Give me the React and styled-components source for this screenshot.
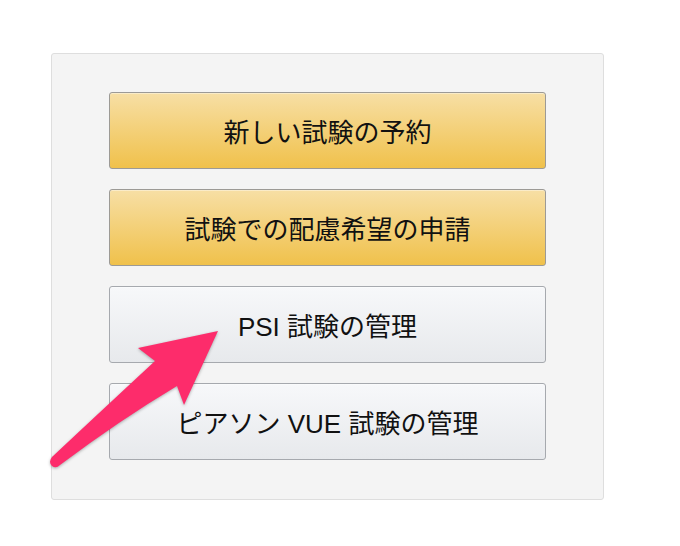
import React from "react";
import styled, { createGlobalStyle } from "styled-components";

const GlobalStyle = createGlobalStyle`
  html, body {
    margin: 0;
    padding: 0;
    background: #ffffff;
  }
  body {
    font-family: "Liberation Sans", "Noto Sans CJK JP", sans-serif;
  }
`;

const Page = styled.div`
  position: relative;
  width: 680px;
  height: 546px;
  padding: 53px 0 0 51px;
  box-sizing: border-box;
`;

const Panel = styled.div`
  width: 553px;
  box-sizing: border-box;
  padding: 38px 57px 39px;
  background: #f4f4f4;
  border: 1px solid #dedede;
  border-radius: 3px;
  display: flex;
  flex-direction: column;
  gap: 20px;
`;

const ActionButton = styled.button`
  height: 77px;
  width: 100%;
  box-sizing: border-box;
  display: flex;
  align-items: center;
  justify-content: center;
  border-radius: 3px;
  font-family: "Liberation Sans", "Noto Sans CJK JP", sans-serif;
  font-size: 26px;
  color: #111111;
  cursor: pointer;
  border: 1px solid ${(p) => (p.$primary ? "#9c9a96" : "#a6a9ae")};
  background: ${(p) =>
    p.$primary
      ? "linear-gradient(to bottom, #f7dfa5, #f0c14b)"
      : "linear-gradient(to bottom, #f7f8fa, #e7e9ec)"};
  box-shadow: inset 0 1px 0 rgba(255, 255, 255, 0.4);
`;

const ArrowLayer = styled.svg`
  position: absolute;
  left: 0;
  top: 0;
  width: 680px;
  height: 546px;
  pointer-events: none;
  filter: drop-shadow(0 1px 1.5px rgba(0, 0, 0, 0.3));
`;

const buttons = [
  { label: "新しい試験の予約", primary: true },
  { label: "試験での配慮希望の申請", primary: true },
  { label: "PSI 試験の管理", primary: false },
  { label: "ピアソン VUE 試験の管理", primary: false },
];

export default function App() {
  return (
    <>
      <GlobalStyle />
      <Page>
        <Panel>
          {buttons.map((b) => (
            <ActionButton key={b.label} $primary={b.primary}>
              {b.label}
            </ActionButton>
          ))}
        </Panel>
        <ArrowLayer viewBox="0 0 680 546">
          <path
            fill="#fd2c6b"
            d="M218 331 L138 348 L155 361 Q100 412 52 457 Q48 462 52 466 Q56 469 60 465 Q120 420 177 386 L184 405 Z"
          />
        </ArrowLayer>
      </Page>
    </>
  );
}
